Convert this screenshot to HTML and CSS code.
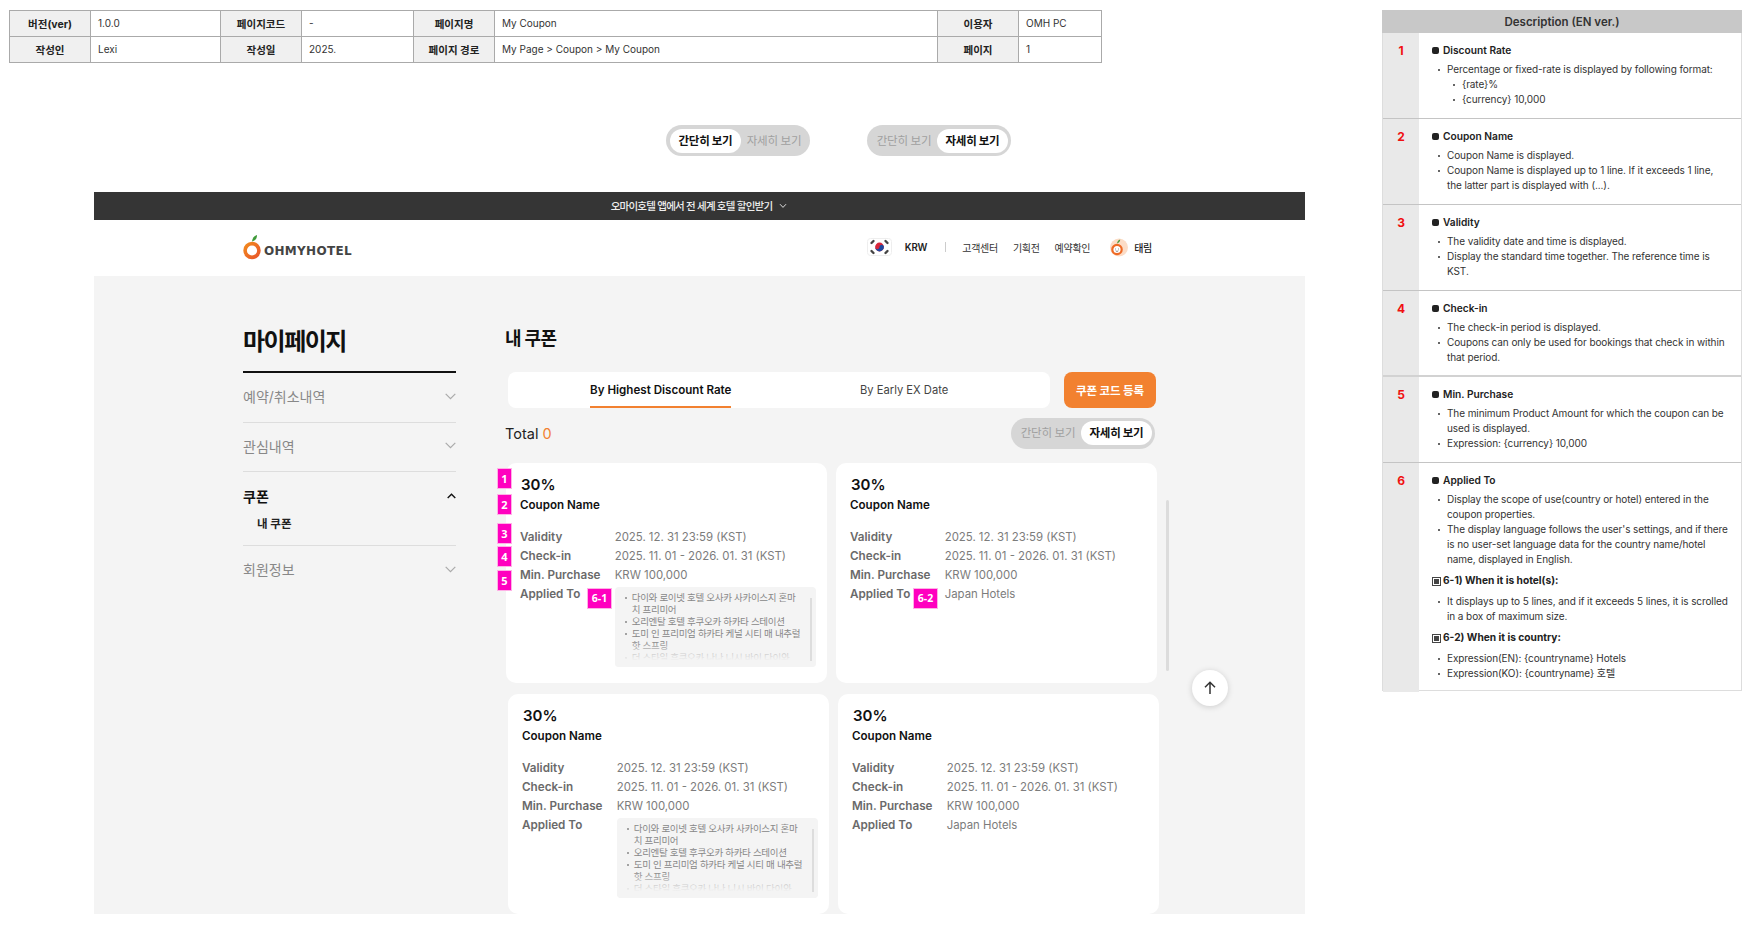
FILE: index.html
```html
<!DOCTYPE html>
<html lang="ko">
<head>
<meta charset="utf-8">
<title>My Coupon</title>
<link rel="stylesheet" href="styles.css">
</head>
<body>
<div class="canvas">
  <div class="left">
    <table class="meta">
      <colgroup><col class="c1"><col class="c2"><col class="c3"><col class="c4"><col class="c5"><col class="c6"><col class="c7"><col class="c8"></colgroup>
      <tr><th>버전(ver)</th><td>1.0.0</td><th>페이지코드</th><td>-</td><th>페이지명</th><td>My Coupon</td><th>이용자</th><td>OMH PC</td></tr>
      <tr><th>작성인</th><td>Lexi</td><th>작성일</th><td>2025.</td><th>페이지 경로</th><td>My Page &gt; Coupon &gt; My Coupon</td><th>페이지</th><td>1</td></tr>
    </table>

    <div class="demo-toggles">
      <div class="toggle"><span class="toggle-opt is-on">간단히 보기</span><span class="toggle-opt">자세히 보기</span></div>
      <div class="toggle"><span class="toggle-opt">간단히 보기</span><span class="toggle-opt is-on">자세히 보기</span></div>
    </div>

    <div class="mock">
      <div class="promo">
        <span>오마이호텔 앱에서 전 세계 호텔 할인받기</span>
        <svg class="promo-chev" width="8" height="6" viewBox="0 0 8 6"><path d="M1 1.2 4 4.4 7 1.2" fill="none" stroke="#ddd" stroke-width="1"/></svg>
      </div>
      <header class="site-head">
        <div class="logo">
          <svg width="20" height="26" viewBox="0 0 20 26">
            <defs><linearGradient id="lg" x1="0" y1="0" x2="1" y2="1"><stop offset="0" stop-color="#f28a1e"/><stop offset="1" stop-color="#e8562a"/></linearGradient></defs>
            <circle cx="9" cy="16.5" r="6.9" fill="none" stroke="url(#lg)" stroke-width="3.6"/>
            <path d="M9 7.5C9.4 4 11.5 1.6 14 1c.2 2.8-1.6 5.6-5 6.5z" fill="#3f9a3a"/>
          </svg>
          <span class="logo-text">OHMYHOTEL</span>
        </div>
        <nav class="site-nav">
          <span class="flag">
            <svg width="25" height="18" viewBox="0 0 25 18">
              <rect x=".5" y=".5" width="24" height="17" rx="3" fill="#fff" stroke="#eee"/>
              <circle cx="12.5" cy="9" r="4.4" fill="#d8263a"/>
              <path d="M8.1 9a4.4 4.4 0 0 0 8.8 0c0-1.2-1-2.2-2.2-2.2S12.5 7.8 12.5 9s-1 2.2-2.2 2.2S8.1 10.200 8.1 9z" fill="#1f4aa0"/>
              <g stroke="#444" stroke-width="2.4" stroke-linecap="round"><path d="M4.500 5 6.500 3"/><path d="M18.500 3 20.500 5"/><path d="M4.500 13 6.500 15"/><path d="M18.500 15 20.500 13"/></g>
            </svg>
          </span>
          <span class="krw">KRW</span>
          <span class="nav-sep"></span>
          <span class="nav-link">고객센터</span>
          <span class="nav-link">기획전</span>
          <span class="nav-link">예약확인</span>
          <span class="user">
            <svg width="19" height="19" viewBox="0 0 19 19">
              <circle cx="10" cy="9.500" r="9" fill="#fcdcc6"/>
              <circle cx="8" cy="11.500" r="4.700" fill="#fff" stroke="#ee6a25" stroke-width="2.200"/>
              <path d="M8 5.500C8.400 3.400 9.500 2 11.200 1.600c0 1.800-1 3.200-3.200 3.900z" fill="#4a9a3c"/>
              <path d="M6 11h.8M9.200 11h.8M6.700 12.800c.8.700 1.800.700 2.600 0" fill="none" stroke="#555" stroke-width=".8"/>
            </svg>
            <span class="user-name">태림</span>
          </span>
        </nav>
      </header>

      <div class="content">
        <aside class="side">
          <h1 class="side-title">마이페이지</h1>
          <div class="side-item"><span>예약/취소내역</span><svg class="chev" width="11" height="7" viewBox="0 0 11 7"><path d="M.7.9 5.500 5.700 10.300.9" fill="none" stroke="#aaa" stroke-width="1.200"/></svg></div>
          <div class="side-item"><span>관심내역</span><svg class="chev" width="11" height="7" viewBox="0 0 11 7"><path d="M.7.9 5.500 5.700 10.300.9" fill="none" stroke="#aaa" stroke-width="1.200"/></svg></div>
          <div class="side-group">
            <div class="side-head"><span>쿠폰</span><svg class="chev" width="9" height="6" viewBox="0 0 9 6"><path d="M.7 5 4.500 1.200 8.300 5" fill="none" stroke="#111" stroke-width="1.400"/></svg></div>
            <div class="side-sub">내 쿠폰</div>
          </div>
          <div class="side-item"><span>회원정보</span><svg class="chev" width="11" height="7" viewBox="0 0 11 7"><path d="M.7.9 5.500 5.700 10.300.9" fill="none" stroke="#aaa" stroke-width="1.200"/></svg></div>
        </aside>

        <main class="main">
          <h2 class="main-title">내 쿠폰</h2>
          <div class="toolbar">
            <div class="tabs">
              <span class="tab is-active">By Highest Discount Rate</span>
              <span class="tab">By Early EX Date</span>
            </div>
            <button class="code-btn">쿠폰 코드 등록</button>
          </div>
          <div class="total-row">
            <div class="total">Total <em>0</em></div>
            <div class="toggle"><span class="toggle-opt">간단히 보기</span><span class="toggle-opt is-on">자세히 보기</span></div>
          </div>

          <div class="card-row">
            <article class="card">
              <span class="mark m1">1</span><span class="mark m2">2</span><span class="mark m3">3</span><span class="mark m4">4</span><span class="mark m5">5</span><span class="mark wide m61">6-1</span>
              <div class="rate">30%</div>
              <div class="cname">Coupon Name</div>
              <dl class="info">
                <dt>Validity</dt><dd>2025. 12. 31 23:59 (KST)</dd>
                <dt>Check-in</dt><dd>2025. 11. 01 - 2026. 01. 31 (KST)</dd>
                <dt>Min. Purchase</dt><dd>KRW 100,000</dd>
                <dt>Applied To</dt>
                <dd>
                  <div class="hotels">
                    <ul>
                      <li>다이와 로이넷 호텔 오사카 사카이스지 혼마치 프리미어</li>
                      <li>오리엔탈 호텔 후쿠오카 하카타 스테이션</li>
                      <li>도미 인 프리미엄 하카타 케널 시티 매 내추럴 핫 스프링</li>
                      <li>더 스타일 후쿠오카 나나 니시 바이 다이와</li>
                    </ul>
                  </div>
                </dd>
              </dl>
            </article>
            <article class="card">
              <span class="mark wide m62">6-2</span>
              <div class="rate">30%</div>
              <div class="cname">Coupon Name</div>
              <dl class="info">
                <dt>Validity</dt><dd>2025. 12. 31 23:59 (KST)</dd>
                <dt>Check-in</dt><dd>2025. 11. 01 - 2026. 01. 31 (KST)</dd>
                <dt>Min. Purchase</dt><dd>KRW 100,000</dd>
                <dt>Applied To</dt><dd>Japan Hotels</dd>
              </dl>
            </article>
          </div>
          <div class="card-row card-row-2">
            <article class="card">
              <div class="rate">30%</div>
              <div class="cname">Coupon Name</div>
              <dl class="info">
                <dt>Validity</dt><dd>2025. 12. 31 23:59 (KST)</dd>
                <dt>Check-in</dt><dd>2025. 11. 01 - 2026. 01. 31 (KST)</dd>
                <dt>Min. Purchase</dt><dd>KRW 100,000</dd>
                <dt>Applied To</dt>
                <dd>
                  <div class="hotels">
                    <ul>
                      <li>다이와 로이넷 호텔 오사카 사카이스지 혼마치 프리미어</li>
                      <li>오리엔탈 호텔 후쿠오카 하카타 스테이션</li>
                      <li>도미 인 프리미엄 하카타 케널 시티 매 내추럴 핫 스프링</li>
                      <li>더 스타일 후쿠오카 나나 니시 바이 다이와</li>
                    </ul>
                  </div>
                </dd>
              </dl>
            </article>
            <article class="card">
              <div class="rate">30%</div>
              <div class="cname">Coupon Name</div>
              <dl class="info">
                <dt>Validity</dt><dd>2025. 12. 31 23:59 (KST)</dd>
                <dt>Check-in</dt><dd>2025. 11. 01 - 2026. 01. 31 (KST)</dd>
                <dt>Min. Purchase</dt><dd>KRW 100,000</dd>
                <dt>Applied To</dt><dd>Japan Hotels</dd>
              </dl>
            </article>
          </div>
        </main>
        <div class="page-scroll"></div>
        <div class="to-top">
          <svg width="14" height="14" viewBox="0 0 14 14"><path d="M7 13V1.500M2 6.300 7 1.300l5 5" fill="none" stroke="#333" stroke-width="1.500"/></svg>
        </div>
      </div>
    </div>
  </div>

  <section class="desc">
    <div class="desc-head">Description (EN ver.)</div>
    <div class="desc-row">
      <div class="num">1</div>
      <div class="body">
        <div class="ttl">Discount Rate</div>
        <ul class="pts">
          <li>Percentage or fixed-rate is displayed by following format:
            <ul class="pts sub"><li>{rate}%</li><li>{currency} 10,000</li></ul>
          </li>
        </ul>
      </div>
    </div>
    <div class="desc-row">
      <div class="num">2</div>
      <div class="body">
        <div class="ttl">Coupon Name</div>
        <ul class="pts">
          <li>Coupon Name is displayed.</li>
          <li>Coupon Name is displayed up to 1 line. If it exceeds 1 line, the latter part is displayed with (...).</li>
        </ul>
      </div>
    </div>
    <div class="desc-row">
      <div class="num">3</div>
      <div class="body">
        <div class="ttl">Validity</div>
        <ul class="pts">
          <li>The validity date and time is displayed.</li>
          <li>Display the standard time together. The reference time is KST.</li>
        </ul>
      </div>
    </div>
    <div class="desc-row row-thick">
      <div class="num">4</div>
      <div class="body">
        <div class="ttl">Check-in</div>
        <ul class="pts">
          <li>The check-in period is displayed.</li>
          <li>Coupons can only be used for bookings that check in within that period.</li>
        </ul>
      </div>
    </div>
    <div class="desc-row">
      <div class="num">5</div>
      <div class="body">
        <div class="ttl">Min. Purchase</div>
        <ul class="pts">
          <li>The minimum Product Amount for which the coupon can be used is displayed.</li>
          <li>Expression: {currency} 10,000</li>
        </ul>
      </div>
    </div>
    <div class="desc-row row-last">
      <div class="num">6</div>
      <div class="body">
        <div class="ttl">Applied To</div>
        <ul class="pts">
          <li>Display the scope of use(country or hotel) entered in the coupon properties.</li>
          <li>The display language follows the user's settings, and if there is no user-set language data for the country name/hotel name, displayed in English.</li>
        </ul>
        <div class="subttl">6-1) When it is hotel(s):</div>
        <ul class="pts spaced">
          <li>It displays up to 5 lines, and if it exceeds 5 lines, it is scrolled in a box of maximum size.</li>
        </ul>
        <div class="subttl">6-2) When it is country:</div>
        <ul class="pts spaced">
          <li>Expression(EN): {countryname} Hotels</li>
          <li>Expression(KO): {countryname} 호텔</li>
        </ul>
      </div>
    </div>
  </section>
</div>
</body>
</html>
```

FILE: styles.css
```css
* { box-sizing: border-box; }
html, body { margin: 0; padding: 0; background: #fff; overflow: hidden; }
body { font-family: Inter, "Noto Sans CJK KR", sans-serif; color: #222; }
ul, dl, dd, dt, h1, h2 { margin: 0; padding: 0; }
ul { list-style: none; }

.canvas { display: flex; width: 1757px; height: 928px; overflow: hidden; }
.left { width: 1382px; flex: none; }

/* meta table */
.meta { margin: 10px 0 0 9px; width: 1093px; height: 52px; border-collapse: collapse; table-layout: fixed; font-size: 10px; }
.meta th, .meta td { border: 1px solid #aaa; height: 26px; padding: 0; }
.meta th { background: #f0f0f0; font-weight: 700; color: #222; text-align: center; font-size: 10.500px; }
.meta td { padding: 0 0 1px 7px; color: #333; }
.c1, .c3, .c5, .c7 { width: 81px; }
.c2 { width: 130px; }
.c4 { width: 112px; }
.c6 { width: 443px; }
.c8 { width: 83px; }

/* toggle */
.demo-toggles { display: flex; gap: 57px; margin: 62px 0 0 666px; }
.toggle { display: flex; align-items: center; width: 144px; height: 31px; padding: 0 3px 0 4px; border-radius: 16px; background: #d6d6d6; }
.toggle-opt { display: block; flex: none; width: 66px; height: 24px; line-height: 24px; text-align: center; font-size: 11.500px; letter-spacing: -.3px; color: #a0a0a0; white-space: nowrap; }
.toggle-opt.is-on { width: 71px; background: #fff; border-radius: 12px; color: #111; font-weight: 700; }

/* mock page */
.mock { width: 1211px; margin: 36px 0 0 94px; }
.promo { display: flex; align-items: center; justify-content: center; gap: 7px; height: 28px; padding: 0 1px 2px 0; background: #353535; color: #eee; font-size: 10.500px; letter-spacing: -.75px; font-weight: 500; }
.promo-chev { margin-top: 2px; }
.site-head { display: flex; align-items: center; justify-content: space-between; height: 56px; padding: 0 153px 0 149px; background: #fff; }
.logo { display: flex; align-items: flex-end; gap: 1px; margin-top: -3px; }
.logo svg { display: block; }
.logo-text { font-family: "DejaVu Sans", sans-serif; font-weight: 700; font-size: 12px; line-height: 18px; letter-spacing: .3px; color: #444; }
.site-nav { display: flex; align-items: center; padding-bottom: 2px; font-size: 10px; }
.flag { display: block; height: 18px; }
.flag svg, .user svg { display: block; }
.krw { margin-left: 13px; font-size: 9.700px; font-weight: 600; color: #222; letter-spacing: -.2px; }
.nav-sep { width: 1px; height: 10px; margin: 0 16px 0 18px; background: #ccc; }
.nav-link { margin-right: 15px; color: #333; letter-spacing: -.3px; white-space: nowrap; }
.user { display: flex; align-items: center; gap: 6px; margin-left: 4px; }
.user-name { color: #222; font-weight: 500; letter-spacing: -.3px; }

.content { position: relative; display: flex; height: 638px; padding-left: 149px; background: #f4f4f4; overflow: hidden; }
.side { flex: none; width: 213px; }
.side-title { height: 49px; padding: 2px 0 13px; border-bottom: 2px solid #111; margin-top: 48px; font-size: 24px; line-height: 32px; font-weight: 700; color: #111; letter-spacing: -1.500px; }
.side-item { display: flex; align-items: center; justify-content: space-between; height: 49.500px; padding-bottom: 2px; border-bottom: 1px solid #ddd; font-size: 14px; color: #888; }
.side-item:last-child { border-bottom: 0; }
.side-group { height: 73.500px; border-bottom: 1px solid #ddd; }
.side-head { display: flex; align-items: center; justify-content: space-between; height: 49.500px; padding-bottom: 2px; font-size: 14px; font-weight: 700; color: #111; }
.chev { display: block; }
.side-sub { margin: -7px 0 0 14px; font-size: 11.500px; line-height: 18px; font-weight: 700; color: #222; }

.main { flex: none; width: 652px; margin-left: 49px; }
.main-title { margin-top: 51px; font-size: 18px; line-height: 24px; font-weight: 700; color: #111; letter-spacing: -.6px; }
.toolbar { display: flex; gap: 14px; margin: 21px 0 0 3px; }
.tabs { display: flex; width: 542px; height: 36px; padding-left: 82px; gap: 129px; background: #fff; border-radius: 8px; }
.tab { height: 36px; line-height: 36px; font-size: 11.200px; color: #444; white-space: nowrap; }
.tab.is-active { width: 141px; font-size: 11.600px; font-weight: 600; color: #111; border-bottom: 2px solid #f28130; }
.code-btn { width: 92px; height: 36px; padding: 0; border: 0; border-radius: 8px; background: #f28130; color: #fff; font: 700 11.500px Inter, "Noto Sans CJK KR", sans-serif; letter-spacing: -.1px; }
.total-row { display: flex; align-items: center; justify-content: space-between; height: 30px; margin-top: 10px; padding-right: 2px; }
.total { font-size: 14.500px; color: #222; }
.total em { font-style: normal; color: #f28130; }

.card-row { display: flex; gap: 9px; margin: 15px 0 0 1px; }
.card-row-2 { margin: 11px 0 0 3px; }
.card { position: relative; flex: none; width: 321px; height: 220px; padding: 13px 14px 0; background: #fff; border-radius: 10px; }
.rate { font-size: 15px; line-height: 18px; font-weight: 600; color: #111; padding-left: 1px; }
.cname { margin-top: 2px; font-size: 11.600px; line-height: 18px; font-weight: 600; color: #111; }
.info { display: grid; grid-template-columns: 94.700px 1fr; grid-auto-rows: 19.300px; margin-top: 13.500px; font-size: 11.700px; line-height: 19.300px; }
.info dt { font-weight: 600; color: #6a6a6a; white-space: nowrap; }
.info dd { color: #7c7c7c; white-space: nowrap; font-size: 11.400px; }
.hotels { position: relative; width: 201px; height: 80px; margin-top: 2px; padding: 5px 13px 0 17px; background: #f4f4f4; border-radius: 4px; overflow: hidden; }
.hotels li { position: relative; white-space: normal; font-size: 9.500px; line-height: 12px; color: #888; letter-spacing: -.3px; }
.hotels li::before { content: ""; position: absolute; left: -7px; top: 5px; width: 2px; height: 2px; border-radius: 50%; background: #888; }
.hotels::before { content: ""; position: absolute; z-index: 2; right: 4px; top: 11px; width: 2px; height: 63px; background: #ddd; }
.hotels::after { content: ""; position: absolute; left: 0; right: 0; bottom: 0; height: 26px; background: linear-gradient(rgba(244,244,244,0), #f4f4f4 75%); }

.mark { position: absolute; left: -9px; width: 15px; height: 21px; line-height: 21px; text-align: center; background: #ff00bf; color: #fff; font-family: "Noto Sans", sans-serif; font-size: 11px; font-weight: 700; outline: 1px solid #ffb0e6; outline-offset: -1px; }
.mark.wide { width: 25px; font-size: 10.500px; }
.m1 { top: 5px; }
.m2 { top: 31px; }
.m3 { top: 60px; }
.m4 { top: 83px; }
.m5 { top: 107px; }
.m61 { top: 125px; left: 81px; }
.m62 { top: 125px; left: 77px; }

.page-scroll { position: absolute; left: 1072px; top: 224px; width: 3px; height: 171px; border-radius: 2px; background: #dcdcdc; }
.to-top { position: absolute; left: 1098px; top: 394px; display: flex; align-items: center; justify-content: center; width: 36px; height: 36px; border-radius: 50%; background: #fff; box-shadow: 0 1px 6px rgba(0,0,0,.16); }
.to-top svg { display: block; }

/* description */
.desc { flex: none; width: 360px; height: 681px; margin-top: 10px; border: 1px solid #ddd; border-top: 0; font-size: 10px; line-height: 15px; letter-spacing: -.09px; color: #333; }
.desc-head { height: 23px; margin: 0 -1px; line-height: 24px; text-align: center; background: #c8c8c8; font-size: 11.500px; letter-spacing: 0; font-weight: 600; color: #333; }
.desc-row { display: grid; grid-template-columns: 36px 1fr; border-bottom: 1px solid #c4c4c4; }
.row-thick { border-bottom: 2px solid #d2d2d2; }
.row-last { border-bottom: 0; }
.num { padding-top: 10px; background: #e9e9e9; text-align: center; color: #f01010; font-size: 12px; font-weight: 700; }
.body { padding: 10px 11px 11px 13px; }
.row-thick .body { padding-bottom: 10px; }
.ttl { position: relative; padding-left: 11px; font-size: 10.200px; letter-spacing: 0; font-weight: 600; color: #222; }
.ttl::before { content: ""; position: absolute; left: 0; top: 4px; width: 7px; height: 7px; border-radius: 2px; background: #222; }
.pts { margin-top: 4px; padding-left: 15px; }
.pts li { position: relative; }
.pts li::before { content: ""; position: absolute; left: -9px; top: 7px; width: 2px; height: 2px; border-radius: 50%; background: #333; }
.pts.sub { margin-top: 0; padding-left: 15px; }
.pts.spaced { margin-top: 6px; }
.subttl { position: relative; margin-top: 6px; padding-left: 11px; font-size: 10.200px; letter-spacing: 0; font-weight: 700; color: #222; }
.subttl::before { content: ""; position: absolute; left: 0; top: 4px; width: 7px; height: 7px; border: 1px solid #444; background: #444; box-shadow: inset 0 0 0 1px #fff; }
```
